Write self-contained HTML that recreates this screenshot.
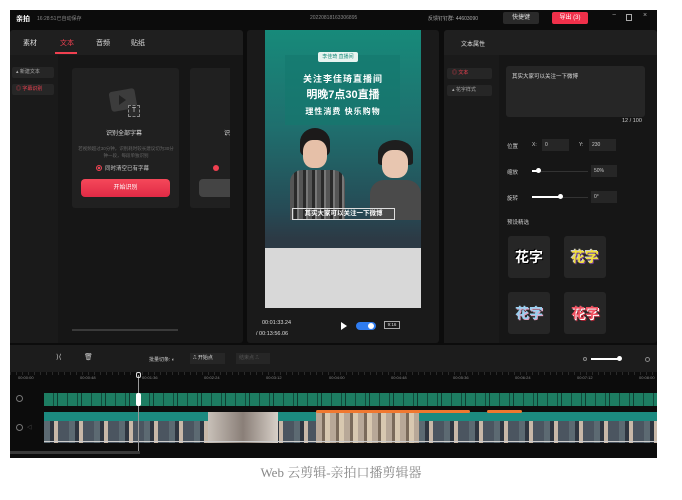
<!DOCTYPE html>
<html><head><meta charset="utf-8"><style>
*{margin:0;padding:0;box-sizing:border-box}
body{width:682px;height:500px;background:#fff;position:relative;overflow:hidden;font-family:"Liberation Sans","Noto Sans CJK SC",sans-serif;color:#ddd}
.a{position:absolute}
.t{font-size:7px;white-space:nowrap}
.s{font-size:5px;white-space:nowrap;color:#888}
</style></head><body>
<div class="a" style="left:10px;top:10px;width:647px;height:448px;background:#0c0c0c"></div>
<!-- top bar -->
<div class="a t" style="left:16px;top:14px;font-weight:bold;color:#fff">亲拍</div>
<div class="a s" style="left:37px;top:15px">16:28:51已自动保存</div>
<div class="a s" style="left:310px;top:15px">20220818163306895</div>
<div class="a s" style="left:428px;top:15px;color:#aaa">反馈钉钉群: 44603090</div>
<div class="a t" style="left:503px;top:12px;width:36px;height:12px;background:#2a2a2a;border-radius:2px;text-align:center;line-height:12px;font-size:6px">快捷键</div>
<div class="a t" style="left:552px;top:12px;width:36px;height:12px;background:#f0304a;border-radius:2px;text-align:center;line-height:12px;font-size:6px;color:#fff">导出 (3)</div>
<div class="a t" style="left:612px;top:12px;color:#aaa">−</div>
<div class="a" style="left:626px;top:14px;width:6px;height:7px;border:1px solid #aaa"></div>
<div class="a t" style="left:643px;top:12px;color:#aaa">×</div>
<!-- left panel -->
<div class="a" style="left:10px;top:30px;width:233px;height:313px;background:#161616;border-radius:3px"></div>
<div class="a" style="left:10px;top:30px;width:233px;height:25px;background:#1f1f1f;border-radius:3px 3px 0 0"></div>
<div class="a t" style="left:23px;top:38px;color:#ddd">素材</div>
<div class="a t" style="left:60px;top:38px;color:#f04050">文本</div>
<div class="a" style="left:55px;top:52px;width:22px;height:2px;background:#f04050"></div>
<div class="a t" style="left:96px;top:38px">音频</div>
<div class="a t" style="left:131px;top:38px">贴纸</div>
<div class="a" style="left:10px;top:55px;width:48px;height:288px;background:#1a1a1a"></div>
<div class="a s" style="left:12px;top:67px;width:42px;height:11px;background:#262626;border-radius:2px;line-height:11px;padding-left:4px;color:#aaa">▴ 新建文本</div>
<div class="a s" style="left:12px;top:84px;width:42px;height:11px;background:#262626;border-radius:2px;line-height:11px;padding-left:4px;color:#f04050">◎ 字幕识别</div>
<div class="a" style="left:72px;top:68px;width:107px;height:140px;background:#202020;border-radius:3px"></div>
<div class="a" style="left:110px;top:90px;width:26px;height:20px;background:#3c3c3c;border-radius:3px;transform:rotate(-10deg)"></div>
<div class="a" style="left:119px;top:95px;width:0;height:0;border-left:7px solid #222;border-top:5px solid transparent;border-bottom:5px solid transparent"></div>
<div class="a" style="left:128px;top:105px;width:12px;height:12px;border:1px dashed #888;background:#2a2a2a;font-size:7px;text-align:center;line-height:10px;color:#ccc">T</div>
<div class="a t" style="left:106px;top:128px;font-size:6px;color:#ddd">识别全部字幕</div>
<div class="a s" style="left:78px;top:145px;width:96px;text-align:center;line-height:7px;font-size:4.5px;color:#666;white-space:normal">若视频超过30分钟，识别耗时较长建议切为30分钟一段，每段单独识别</div>
<div class="a" style="left:96px;top:165px;width:6px;height:6px;border-radius:50%;border:1px solid #f04050;background:radial-gradient(#f04050 40%,#333 45%)"></div>
<div class="a s" style="left:105px;top:164px;color:#ccc;font-size:5.5px">同时清空已有字幕</div>
<div class="a" style="left:81px;top:179px;width:89px;height:18px;background:linear-gradient(#f5485a,#e02a45);border-radius:4px;font-size:6px;color:#fff;text-align:center;line-height:18px">开始识别</div>
<div class="a" style="left:190px;top:68px;width:40px;height:140px;background:#202020;border-radius:3px 0 0 3px"></div>
<div class="a t" style="left:224px;top:128px;font-size:6px">识</div>
<div class="a" style="left:213px;top:165px;width:6px;height:6px;border-radius:50%;background:#f04050"></div>
<div class="a" style="left:199px;top:179px;width:31px;height:18px;background:#444;border-radius:4px 0 0 4px"></div>
<div class="a" style="left:72px;top:329px;width:106px;height:2px;background:#3a3a3a"></div>
<!-- center -->
<div class="a" style="left:247px;top:30px;width:192px;height:313px;background:#1a1a1a;border-radius:3px"></div>
<div class="a" style="left:265px;top:30px;width:156px;height:278px;background:linear-gradient(#178a7a 0%,#1f6f6e 35%,#264a55 65%,#2c3a45 75%)"></div>
<div class="a" style="left:285px;top:55px;width:115px;height:70px;background:rgba(20,120,110,.6)"></div>
<div class="a" style="left:318px;top:52px;width:40px;height:10px;background:#e8f4f0;border-radius:2px;font-size:5px;color:#178a7a;text-align:center;line-height:10px">李佳琦 直播间</div>
<div class="a" style="left:290px;top:72px;width:106px;text-align:center;font-size:9px;font-weight:bold;color:#fff;letter-spacing:1px">关注李佳琦直播间</div>
<div class="a" style="left:290px;top:86px;width:106px;text-align:center;font-size:11px;font-weight:bold;color:#fff">明晚7点30直播</div>
<div class="a" style="left:290px;top:106px;width:106px;text-align:center;font-size:8px;font-weight:bold;color:#fff;letter-spacing:1px">理性消费 快乐购物</div>
<div class="a" style="left:300px;top:128px;width:30px;height:28px;background:#1c1a1a;border-radius:50% 50% 20% 20%"></div>
<div class="a" style="left:303px;top:140px;width:24px;height:28px;background:#e6c0a8;border-radius:40%"></div>
<div class="a" style="left:290px;top:170px;width:55px;height:50px;background:repeating-linear-gradient(90deg,#555 0 4px,#2a2a2a 4px 7px,#777 7px 9px);border-radius:12px 12px 0 0"></div>
<div class="a" style="left:378px;top:140px;width:35px;height:25px;background:#1e1e1e;border-radius:50% 50% 10% 10%"></div>
<div class="a" style="left:382px;top:150px;width:26px;height:28px;background:#e8c6b0;border-radius:40%"></div>
<div class="a" style="left:370px;top:180px;width:51px;height:40px;background:#4a4a4a;border-radius:14px 14px 0 0"></div>
<div class="a" style="left:265px;top:248px;width:156px;height:60px;background:#d8d8d8"></div>
<div class="a" style="left:292px;top:208px;width:103px;height:12px;border:1px solid #ddd;font-size:6.5px;color:#fff;text-align:center;line-height:10px;font-weight:bold">其实大家可以关注一下微博</div>
<div class="a s" style="left:262px;top:320px;color:#ddd;font-size:5.5px">00:01:33.24</div>
<div class="a s" style="left:256px;top:331px;color:#ddd;font-size:5.5px">/ 00:13:56.06</div>
<div class="a" style="left:341px;top:322px;width:0;height:0;border-left:6px solid #fff;border-top:4px solid transparent;border-bottom:4px solid transparent"></div>
<div class="a" style="left:356px;top:322px;width:20px;height:8px;border-radius:4px;background:#2f7cf0"></div>
<div class="a" style="left:368px;top:323px;width:6px;height:6px;border-radius:50%;background:#fff"></div>
<div class="a" style="left:384px;top:321px;width:16px;height:8px;border:1px solid #aaa;font-size:4.5px;text-align:center;line-height:6px;color:#ddd">9:16</div>
<!-- right -->
<div class="a" style="left:444px;top:30px;width:213px;height:313px;background:#161616;border-radius:3px"></div>
<div class="a" style="left:444px;top:30px;width:213px;height:25px;background:#1f1f1f;border-radius:3px 3px 0 0"></div>
<div class="a t" style="left:461px;top:39px;font-size:6px">文本属性</div>
<div class="a" style="left:444px;top:55px;width:55px;height:288px;background:#1a1a1a"></div>
<div class="a s" style="left:447px;top:68px;width:45px;height:11px;background:#262626;border-radius:2px;line-height:11px;padding-left:5px;color:#f04050">◎ 文本</div>
<div class="a s" style="left:447px;top:85px;width:45px;height:11px;background:#262626;border-radius:2px;line-height:11px;padding-left:5px;color:#aaa">▴ 花字样式</div>
<div class="a" style="left:506px;top:66px;width:139px;height:51px;background:#262626;border-radius:3px"></div>
<div class="a s" style="left:512px;top:72px;color:#ddd;font-size:5.5px">其实大家可以关注一下微博</div>
<div class="a s" style="left:622px;top:118px;color:#ccc;font-size:5.5px">12 / 100</div>
<div class="a s" style="left:507px;top:142px;color:#ccc;font-size:5.5px">位置</div>
<div class="a s" style="left:532px;top:142px;color:#ccc">X:</div>
<div class="a" style="left:542px;top:139px;width:27px;height:12px;background:#262626;font-size:5px;color:#ccc;line-height:12px;padding-left:3px">0</div>
<div class="a s" style="left:579px;top:142px;color:#ccc">Y:</div>
<div class="a" style="left:589px;top:139px;width:27px;height:12px;background:#262626;font-size:5px;color:#ccc;line-height:12px;padding-left:3px">230</div>
<div class="a s" style="left:507px;top:168px;color:#ccc;font-size:5.5px">缩放</div>
<div class="a" style="left:532px;top:171px;width:56px;height:1px;background:#333"></div>
<div class="a" style="left:532px;top:170px;width:6px;height:2px;background:#fff"></div>
<div class="a" style="left:536px;top:168px;width:5px;height:5px;border-radius:50%;background:#fff"></div>
<div class="a" style="left:591px;top:165px;width:26px;height:12px;background:#262626;font-size:5px;color:#ccc;line-height:12px;padding-left:3px">50%</div>
<div class="a s" style="left:507px;top:194px;color:#ccc;font-size:5.5px">旋转</div>
<div class="a" style="left:532px;top:197px;width:56px;height:1px;background:#333"></div>
<div class="a" style="left:532px;top:196px;width:28px;height:2px;background:#fff"></div>
<div class="a" style="left:558px;top:194px;width:5px;height:5px;border-radius:50%;background:#fff"></div>
<div class="a" style="left:591px;top:191px;width:26px;height:12px;background:#262626;font-size:5px;color:#ccc;line-height:12px;padding-left:3px">0°</div>
<div class="a s" style="left:507px;top:218px;color:#ccc;font-size:5.5px">预设精选</div>
<div class="a" style="left:508px;top:236px;width:42px;height:42px;background:#262626;border-radius:3px;font-size:14px;font-weight:bold;color:#fff;text-align:center;line-height:42px;text-shadow:1px 1px 0 #000,-1px -1px 0 #000">花字</div>
<div class="a" style="left:564px;top:236px;width:42px;height:42px;background:#262626;border-radius:3px;font-size:14px;font-weight:bold;color:#f0e040;text-align:center;line-height:42px;text-shadow:1px 1px 0 #6a3a8a,-1px -1px 0 #ccc">花字</div>
<div class="a" style="left:508px;top:292px;width:42px;height:42px;background:#262626;border-radius:3px;font-size:14px;font-weight:bold;color:#9ad0f0;text-align:center;line-height:42px;text-shadow:1px 1px 0 #e0a0c0">花字</div>
<div class="a" style="left:564px;top:292px;width:42px;height:42px;background:#262626;border-radius:3px;font-size:14px;font-weight:bold;color:#f05060;text-align:center;line-height:42px;text-shadow:1px 1px 0 #fff,2px 2px 0 #a02030">花字</div>
<!-- timeline -->
<div class="a" style="left:10px;top:345px;width:647px;height:27px;background:#1c1c1c"></div>
<div class="a t" style="left:56px;top:353px;color:#ccc">⟩⟨</div>
<div class="a t" style="left:84px;top:353px;color:#ccc">🗑</div>
<div class="a s" style="left:149px;top:356px;color:#ccc">批量切条: ◐</div>
<div class="a s" style="left:190px;top:353px;width:35px;height:11px;background:#262626;line-height:11px;padding-left:3px;color:#ddd">⎍ 开始点</div>
<div class="a s" style="left:236px;top:353px;width:34px;height:11px;background:#262626;line-height:11px;padding-left:3px;color:#555">结束点 ⎍</div>
<div class="a" style="left:583px;top:357px;width:4px;height:4px;border-radius:50%;border:1px solid #888"></div>
<div class="a" style="left:591px;top:358px;width:28px;height:2px;background:#fff"></div>
<div class="a" style="left:617px;top:356px;width:5px;height:5px;border-radius:50%;background:#fff"></div>
<div class="a" style="left:645px;top:357px;width:5px;height:5px;border-radius:50%;border:1px solid #888"></div>
<div class="a" style="left:10px;top:372px;width:647px;height:16px;background:repeating-linear-gradient(90deg,#2a2a2a 0 1px,transparent 1px 6px);background-size:100% 3px;background-repeat:no-repeat"></div>
<div class="a s" style="left:18px;top:375px;font-size:4px">00:00:00</div>
<div class="a s" style="left:80px;top:375px;font-size:4px">00:00:48</div>
<div class="a s" style="left:142px;top:375px;font-size:4px">00:01:36</div>
<div class="a s" style="left:204px;top:375px;font-size:4px">00:02:24</div>
<div class="a s" style="left:266px;top:375px;font-size:4px">00:03:12</div>
<div class="a s" style="left:329px;top:375px;font-size:4px">00:04:00</div>
<div class="a s" style="left:391px;top:375px;font-size:4px">00:04:48</div>
<div class="a s" style="left:453px;top:375px;font-size:4px">00:05:36</div>
<div class="a s" style="left:515px;top:375px;font-size:4px">00:06:24</div>
<div class="a s" style="left:577px;top:375px;font-size:4px">00:07:12</div>
<div class="a s" style="left:639px;top:375px;font-size:4px">00:08:00</div>
<div class="a" style="left:16px;top:395px;width:7px;height:7px;border-radius:50%;border:1px solid #777"></div>
<div class="a" style="left:44px;top:393px;width:613px;height:13px;background:repeating-linear-gradient(90deg,#1d7d62 0 9px,#124a3c 9px 10px,#1d7d62 10px 13px,#0f3c31 13px 14px,#1d7d62 14px 23px,#124a3c 23px 24px)"></div>
<div class="a" style="left:16px;top:424px;width:7px;height:7px;border-radius:50%;border:1px solid #777"></div>
<div class="a s" style="left:27px;top:424px;color:#777">◁</div>
<div class="a" style="left:44px;top:412px;width:613px;height:31px;background:linear-gradient(#1c8a80 0 9px,transparent 9px),repeating-linear-gradient(90deg,#5c6a72 0 6px,#2f3640 6px 10px,#c8b8a8 10px 14px,#4b5560 14px 25px)"></div>
<div class="a" style="left:208px;top:412px;width:70px;height:31px;background:linear-gradient(90deg,#c8c0b8,#8a7f78,#d8d0c8)"></div>
<div class="a" style="left:316px;top:412px;width:103px;height:31px;background:repeating-linear-gradient(90deg,#b8a898 0 6px,#7a6a5a 6px 9px,#d8c8b0 9px 14px)"></div>
<div class="a" style="left:316px;top:410px;width:154px;height:3px;background:#f07830;border-radius:2px"></div>
<div class="a" style="left:487px;top:410px;width:35px;height:3px;background:#f07830;border-radius:2px"></div>
<div class="a" style="left:44px;top:441px;width:613px;height:1px;background:#ccc"></div>
<div class="a" style="left:138px;top:375px;width:1px;height:78px;background:#999"></div>
<div class="a" style="left:136px;top:372px;width:5px;height:6px;border:1px solid #ddd;border-radius:2px"></div>
<div class="a" style="left:136px;top:393px;width:5px;height:13px;background:#fff;border-radius:2px"></div>
<div class="a" style="left:10px;top:451px;width:130px;height:3px;background:#3a3a3a"></div>
<div class="a" style="left:0;top:462px;width:682px;text-align:center;font-family:'Liberation Serif','Noto Serif CJK SC',serif;font-size:13px;color:#888">Web 云剪辑-亲拍口播剪辑器</div>
</body></html>
